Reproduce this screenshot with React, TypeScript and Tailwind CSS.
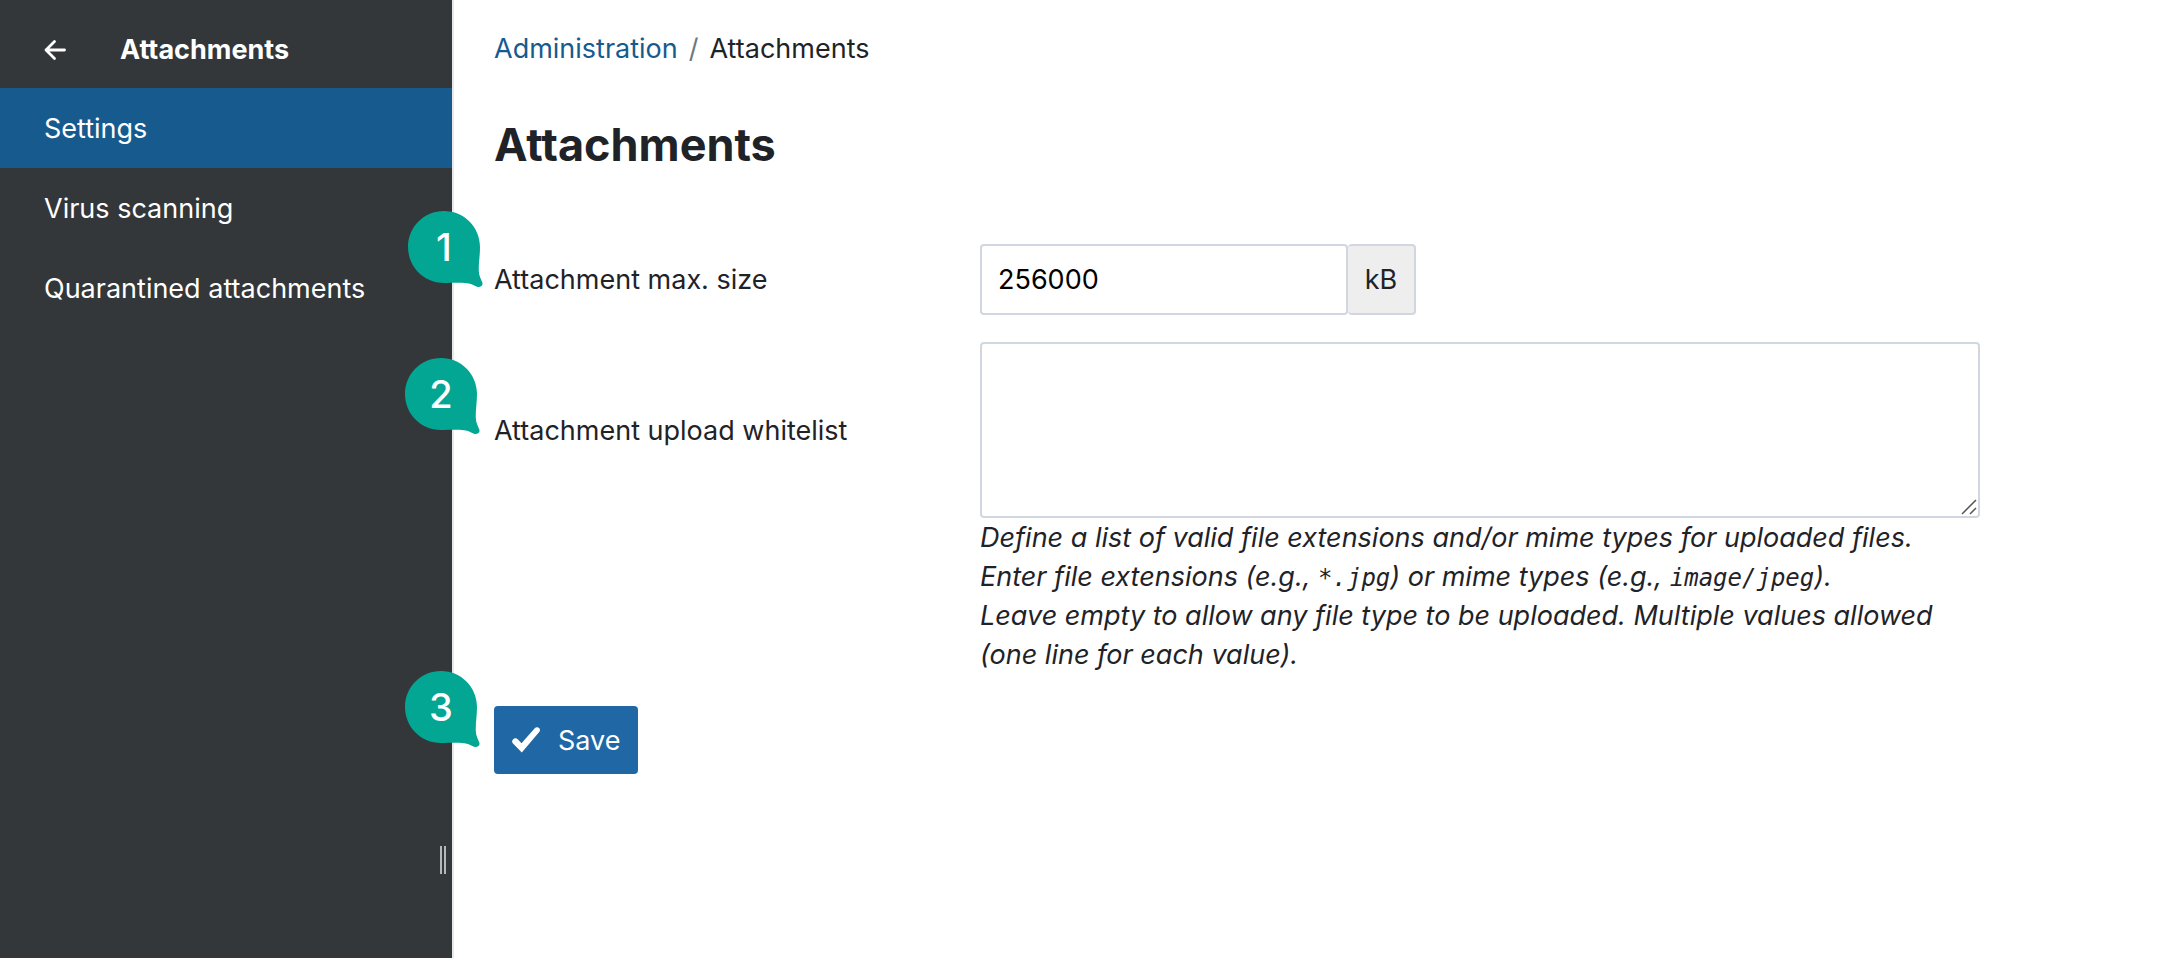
import { useState } from "react";
import type { ReactNode } from "react";

const navItems = [
  { label: "Settings", active: true },
  { label: "Virus scanning", active: false },
  { label: "Quarantined attachments", active: false },
];

function Marker({ children, className }: { children: ReactNode; className: string }) {
  return (
    <span className={`absolute block h-[76px] w-[75px] ${className}`}>
      <svg viewBox="0 0 75 76" className="absolute inset-0 h-full w-full" aria-hidden="true">
        <path
          d="M36 0C56 0 72 16 72 36C72 45 70.5 52 70.8 60C71 65 73 68 74.3 71.5C75.3 74.3 73 76.3 70 76C67.500 75.500 64.500 73 59 72.300C52 71.500 45 72 36 72C16 72 0 56 0 36C0 16 16 0 36 0Z"
          fill="#03a593"
        />
      </svg>
      <span className="relative flex size-[72px] items-center justify-center text-[38px] leading-none font-medium text-white">
        {children}
      </span>
    </span>
  );
}

function Code({ children }: { children: ReactNode }) {
  return (
    <code className="font-['DejaVu_Sans_Mono',monospace] text-[24px] leading-none">{children}</code>
  );
}

export default function App() {
  const [size, setSize] = useState("256000");
  const [whitelist, setWhitelist] = useState("");

  return (
    <div className="flex min-h-screen bg-white font-['Inter','Liberation_Sans',sans-serif] text-[27px] leading-[39px] text-[#1f2328]">
      <aside className="relative w-[454px] shrink-0 border-r-2 border-[#e9e7e7] bg-[#333739] text-white">
        <header className="flex h-[88px] items-center gap-[54px] pt-[11px] pl-11">
          <button type="button" aria-label="Back" className="flex">
            <svg width="22" height="22" viewBox="0 0 22 22" fill="none" stroke="currentColor" strokeWidth="2.800" strokeLinecap="round" strokeLinejoin="round" aria-hidden="true">
              <path d="M20.500 11H2M10.500 2.500L2 11L10.500 19.500" />
            </svg>
          </button>
          <h2 className="font-bold">Attachments</h2>
        </header>
        <nav>
          {navItems.map((item) => (
            <a
              key={item.label}
              href="#"
              aria-current={item.active ? "page" : undefined}
              className={`flex h-20 items-center pl-11 ${item.active ? "bg-[#175a8e]" : ""}`}
            >
              {item.label}
            </a>
          ))}
        </nav>
        <div className="absolute right-[6px] bottom-[84px] flex h-7 gap-[2px]">
          <span className="w-[2px] bg-[#b5b6b7]" />
          <span className="w-[2px] bg-[#b5b6b7]" />
        </div>
      </aside>

      <main className="min-w-0 flex-1 px-10 pt-[29px]">
        <nav aria-label="Breadcrumb" className="flex">
          <a href="#" className="text-[#175a8e]">Administration</a>
          <span className="px-[11px] text-[#6e7781]">/</span>
          <span>Attachments</span>
        </nav>
        <h1 className="mt-[47px] text-[45px] leading-[60px] font-bold">Attachments</h1>

        <form className="mt-[69px] max-w-[1486px]" onSubmit={(e) => e.preventDefault()}>
          <div className="relative flex items-center">
            <Marker className="-top-[33px] -left-[86px]">1</Marker>
            <label htmlFor="max-size" className="w-[486px] shrink-0">Attachment max. size</label>
            <div className="flex h-[71px]">
              <input
                id="max-size"
                type="text"
                value={size}
                onChange={(e) => setSize(e.target.value)}
                className="w-[368px] rounded-[4px] border-2 border-[#d0d7e0] bg-white px-4 text-black"
              />
              <span className="flex w-[68px] items-center justify-center rounded-[4px] border-2 border-l-0 border-[#d0d7e0] bg-[#eeeeee]">kB</span>
            </div>
          </div>

          <div className="relative mt-[27px] flex items-start">
            <Marker className="top-4 -left-[89px]">2</Marker>
            <label htmlFor="whitelist" className="flex h-[176px] w-[486px] shrink-0 items-center">Attachment upload whitelist</label>
            <div className="min-w-0 flex-1">
              <div className="relative">
                <textarea
                  id="whitelist"
                  value={whitelist}
                  onChange={(e) => setWhitelist(e.target.value)}
                  className="block h-[176px] w-full resize-none rounded-[4px] border-2 border-[#d0d7e0] px-4 py-3"
                />
                <svg width="16" height="16" viewBox="0 0 16 16" className="pointer-events-none absolute right-[3px] bottom-[3px]" stroke="#555" strokeWidth="1.500" aria-hidden="true">
                  <path d="M1 15L15 1M9 15L15 9" />
                </svg>
              </div>
              <p className="italic">
                Define a list of valid file extensions and/or mime types for uploaded files.
                <br />
                Enter file extensions (e.g., <Code>*.jpg</Code>) or mime types (e.g., <Code>image/jpeg</Code>).
                <br />
                Leave empty to allow any file type to be uploaded. Multiple values allowed
                <br />
                (one line for each value).
              </p>
            </div>
          </div>

          <div className="relative mt-8 flex">
            <Marker className="-top-[35px] -left-[89px]">3</Marker>
            <button type="submit" className="flex h-[68px] items-center gap-[18px] rounded-[4px] bg-[#1f67a5] px-[18px] text-white">
              <svg width="28" height="26" viewBox="0 0 28 26" aria-hidden="true">
                <path d="M1 12.500C2.500 10.800 4.500 11 6 12.500L9.500 16.300L22.500 1.500C24 0 26 0 27.300 1.300C28.300 2.500 28.200 4 27 5.300L9.800 25.500L1 16.500C-.3 15.200 -.1 13.700 1 12.500Z" fill="currentColor" />
              </svg>
              Save
            </button>
          </div>
        </form>
      </main>
    </div>
  );
}
